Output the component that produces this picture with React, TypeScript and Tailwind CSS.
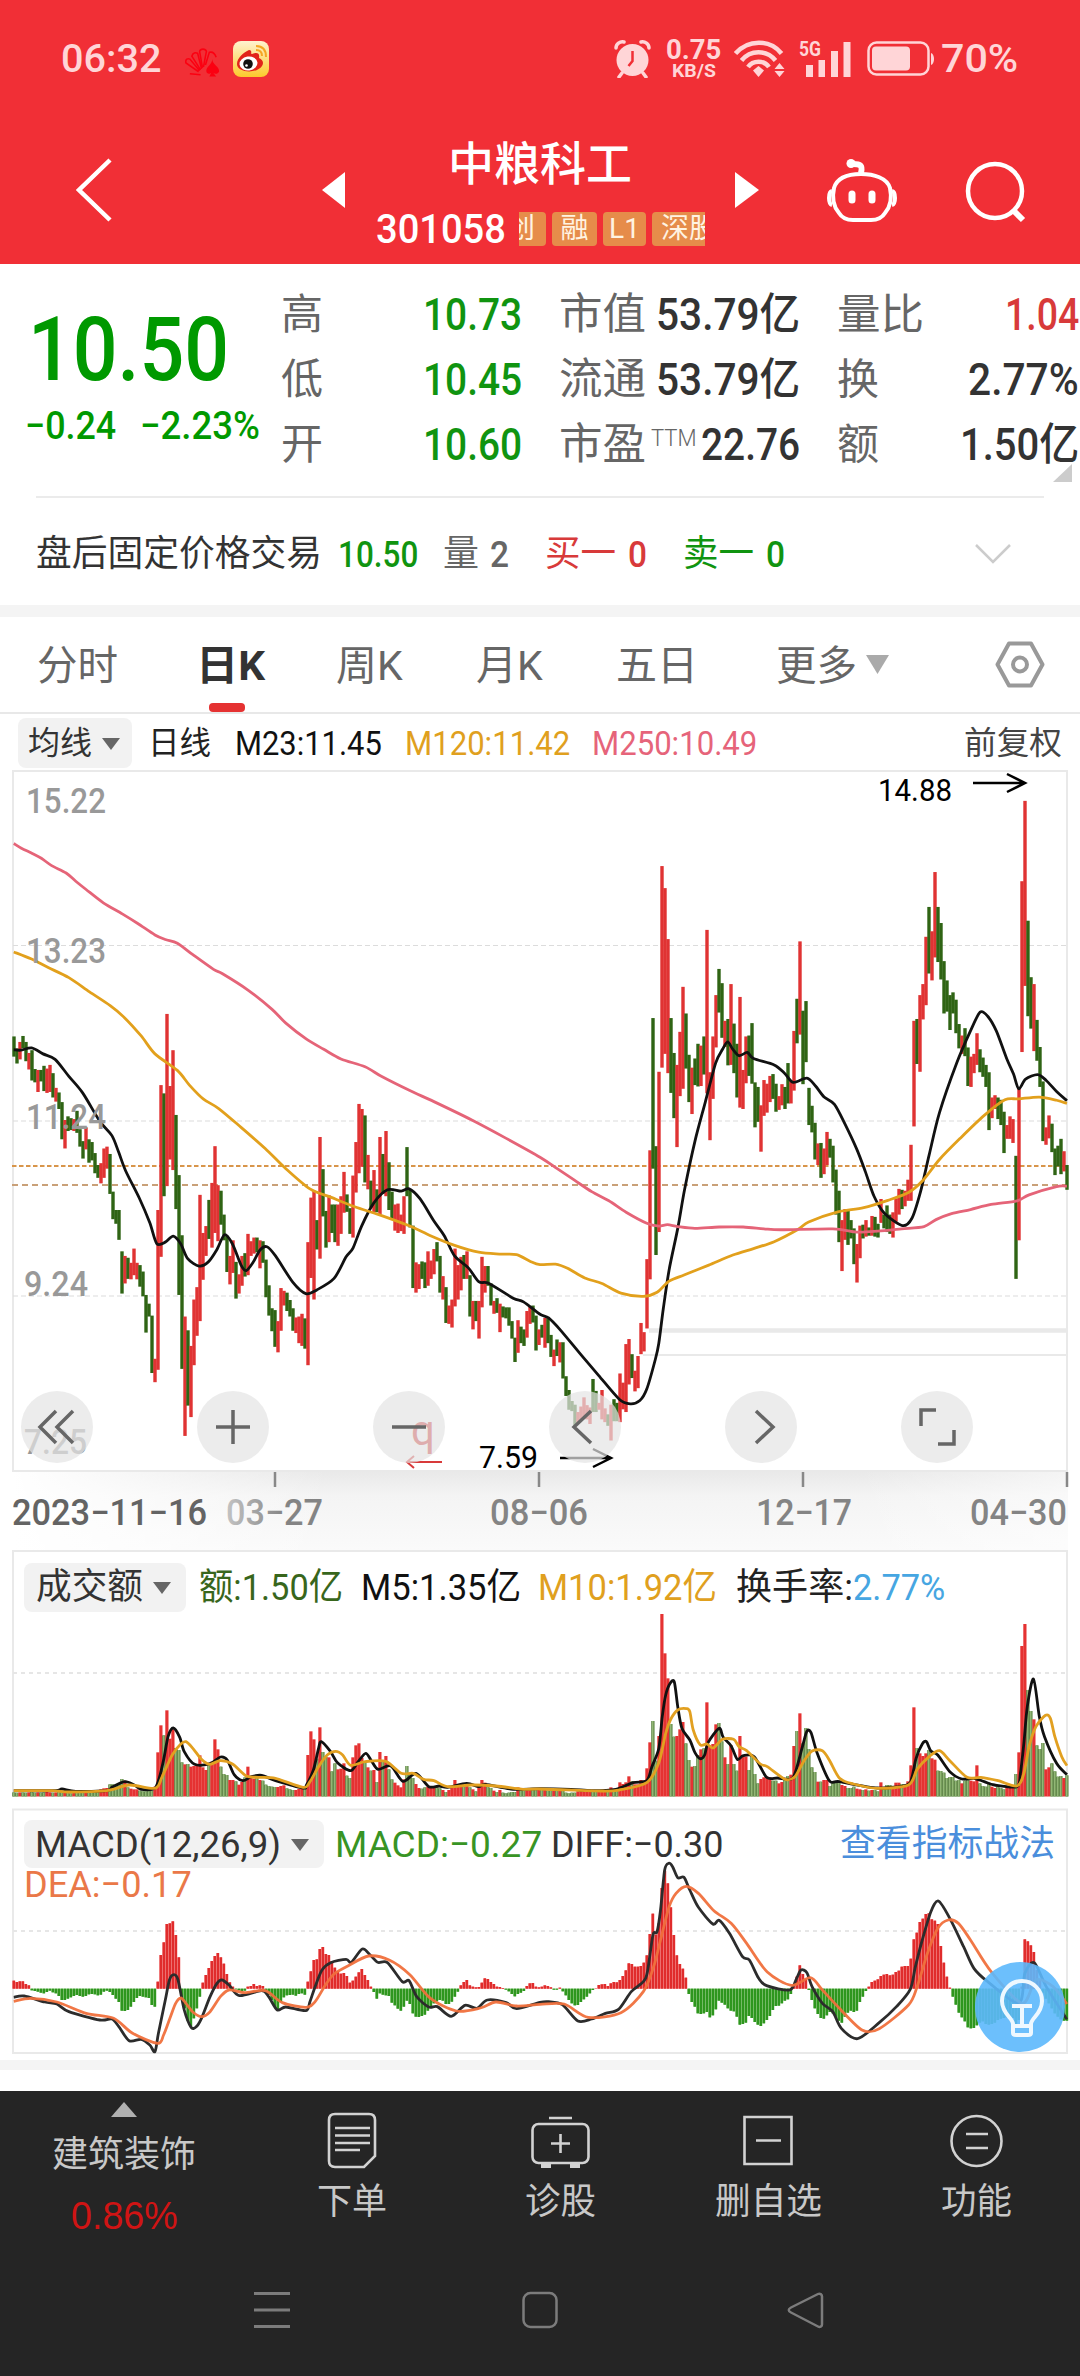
// src/App.tsx
import { useLayoutEffect, useRef, useState } from "react";
import type { ReactNode } from "react";

// One entry per trading day: direction, then the upper and lower end of the bar.
const CANDLES = `
g602-646 g628-661 r614-652 g601-628 g614-656 r638-674 g632-698 g673-702 r675-723 g675-700 g666-721 r672-725
r664-723 g682-735 r714-744 g724-760 g745-826 r784-846 g776-808 g780-806 r782-808 g764-812 g804-842 g830-868
r800-848 g826-877 g832-872 g856-900 g882-910 r878-922 r846-910 r842-890 g858-945 g940-1000 g980-1010 g980-1045
g1070-1162 r1080-1140 g1084-1130 r1095-1131 r1064-1122 r1095-1131 g1100-1147 g1114-1168 g1165-1247 g1184-1212
g1210-1335 r1304-1355 r980-1328 r708-1082 g726-950 r553-928 r710-870 r632-893 g773-978 g904-1165 g1035-1326
r1212-1472 g1242-1406 r1276-1431 r1175-1318 r1148-1254 r947-1222 r1030-1132 r1015-1080 g958-1043 r921-1062
r841-1030 r926-1048 g938-1012 g990-1046 g1036-1115 r1080-1142 r1046-1117 g1093-1173 r1120-1162 r1080-1145
g1074-1125 r1032-1122 r1048-1080 r1040-1075 g1040-1072 r1046-1107 g1048-1095 g1088-1170 g1144-1210 g1194-1244
g1198-1278 r1222-1290 r1150-1243 r1156-1188 g1160-1200 g1176-1212 g1194-1243 r1214-1248 r1212-1270 r1206-1276
g1216-1282 r1050-1318 r953-1128 r938-1175 g1002-1066 r821-1086 g891-994 g982-1062 r948-1050 g968-1030 g968-1050
r968-1058 r950-1032 r897-986 g946-984 g976-1032 r905-1040 r832-942 r749-900 r760-886 g774-920 r860-935 g916-975
r893-985 g935-985 r821-990 g858-945 r808-950 g876-980 g940-1000 r968-1025 r966-1030 r990-1026 r950-1032 g843-950
g935-1018 g1014-1150 r1094-1160 r1098-1152 g1092-1130 g1094-1150 r1070-1145 r1090-1130 r1065-1120 g1050-1092
g1080-1160 r1124-1175 g1148-1226 r1188-1228 r1175-1236 r1064-1190 r1100-1175 r1082-1155 g1078-1130 r1070-1130
g1122-1212 r1178-1240 g1178-1222 r1178-1260 r1082-1192 r1102-1160 g1102-1145 g1140-1188 r1178-1206 g1172-1204
r1184-1246 g1190-1214 g1192-1216 g1192-1232 g1222-1260 g1258-1311 r1220-1291 g1234-1270 g1240-1276 r1200-1258
r1190-1228 g1188-1225 g1210-1286 r1240-1274 g1230-1258 r1215-1280 g1216-1270 g1252-1300 r1284-1320 g1262-1298
r1268-1312 g1268-1347 g1342-1385 g1372-1415 g1396-1418 g1404-1450 r1420-1445 r1408-1436 r1388-1432 r1405-1436
r1410-1446 g1348-1420 g1374-1420 r1400-1415 r1372-1436 r1412-1442 g1425-1450 r1404-1482 g1392-1440 g1400-1440
r1336-1442 r1356-1414 r1272-1420 r1261-1360 g1294-1346 r1330-1375 r1298-1368 r1226-1294 r1246-1288 r1087-1238
r850-1131 g562-890 g841-1078 r679-1028 r231-670 r279-640 r390-682 g562-725 g638-780 r664-843 r592-732 r494-716
g552-672 g642-745 r670-771 g650-708 g618-711 r622-710 g602-685 r370-726 r680-828 r602-738 r512-626 g455-550
g486-605 r568-625 g564-665 r488-664 g574-682 g618-735 r516-757 r675-760 r602-704 g600-688 g573-705 g702-800
g712-788 r752-853 r697-775 r705-768 r688-745 g684-738 g705-766 r732-762 r706-752 g712-760 g660-748 r700-748
r590-720 g520-617 r395-598 g546-706 g525-658 g714-795 g753-811 g790-870 r835-882 g834-910 r846-902 r810-882
g825-866 g840-920 g892-990 g938-1050 r1002-1113 r978-1045 g978-1056 g1002-1042 g1020-1098 r1054-1138 r1014-1085
g1012-1042 r1002-1038 g1018-1036 r993-1036 g995-1038 g1010-1040 r956-1008 g990-1020 g970-1028 g990-1032
r985-1040 r955-1005 r934-990 g936-978 r938-972 r914-960 r838-960 r568-798 g564-662 r512-679 r488-565 r385-534
g320-465 r373-480 r244-430 g320-440 g355-478 g438-552 g480-548 g512-588 g506-552 g522-595 g575-628 r600-640
g584-645 g626-710 r646-712 r640-682 r595-664 g630-680 g648-690 g664-712 g680-806 r735-780 r730-760 g735-782
g740-795 g766-856 r795-825 r776-825 r782-834 g862-1130 r715-1046 r264-636 r89-492 g350-558 g473-585 r488-634
g566-655 g625-712 g700-830 r800-838 r774-824 g792-854 g846-904 g840-885 g825-902 r852-896 g882-936`
  .trim()
  .split(/\s+/)
  .map((s) => {
    const [top, bottom] = s.slice(1).split("-").map(Number);
    return { up: s[0] === "r", top, bottom };
  });

const nums = (s: string) => s.trim().split(/[\s,]+/).map(Number);

const VOLUME = nums(`
757 758 757 757 758 757 756 758 757 758 757 756 757 758 757 755 754 757 758 760 757 757 757 758 758 757 758 756
755 748 745 744 733 733 735 735 717 722 742 746 748 748 752 754 754 752 752 740 637 556 586 511 596 568 624 630
667 673 672 680 678 675 646 682 690 672 665 598 628 680 702 705 720 720 724 734 726 712 680 710 716 714 720 722
734 738 740 741 741 738 736 745 748 750 750 746 745 742 645 574 598 656 562 636 650 652 694 670 688 686 670 707
714 652 616 610 654 666 682 692 690 726 636 660 648 688 718 728 736 742 718 678 700 714 732 744 746 742 740 742
740 742 745 750 756 750 742 720 734 738 738 734 742 748 754 740 720 728 736 744 752 756 750 758 760 758 756 756
742 750 752 746 744 746 748 748 750 748 752 752 752 752 750 752 758 760 758 758 754 752 754 752 752 750 756 752
750 748 754 742 750 745 727 732 727 709 724 733 733 720 722 685 607 543 662 588 222 340 415 552 590 588 568 546
610 660 680 678 645 628 625 487 616 612 553 549 604 652 672 615 672 692 588 645 650 690 645 702 730 717 712 710
712 722 722 730 726 718 708 704 618 573 520 610 564 627 682 696 725 725 720 720 738 728 724 728 735 738 744 744
740 746 748 750 748 752 750 750 754 727 742 735 735 738 728 728 732 735 724 676 502 624 640 648 640 630 655 659
692 693 698 714 711 711 722 720 730 722 718 722 724 676 730 738 740 728 740 744 738 744 748 742 738 738 702 637
318 252 450 513 538 616 627 609 688 682 670 694 710 708 714 706`);

const MACD = nums(`
542 546 544 544 552 556 571 573 575 578 580 576 572 577 580 588 600 600 596 592 588 585 588 590 588 583 582 583
586 584 575 572 576 585 596 606 632 633 630 620 606 594 588 590 592 594 615 620 545 465 427 372 370 364 405 472
590 625 662 680 655 625 590 548 525 504 483 468 459 472 491 522 547 560 568 571 574 572 560 558 552 558 556 558
572 585 600 620 628 605 592 586 585 584 587 582 580 584 545 514 480 478 447 441 462 465 483 503 514 521 519 528
548 542 530 517 507 525 540 560 576 596 580 584 586 588 608 616 626 632 620 602 612 640 650 651 648 644 632 622
610 604 600 602 612 612 605 590 575 556 546 540 556 560 562 561 548 535 537 546 552 560 561 564 569 574 582 589
582 578 573 558 550 549 560 562 560 556 558 562 569 569 563 574 586 600 610 616 615 606 598 590 580 570 565 555
553 552 558 550 546 547 540 528 511 490 492 500 500 498 488 466 402 341 404 370 264 212 250 322 405 466 492 506
533 582 606 620 640 642 640 636 652 646 628 602 608 614 625 632 634 650 674 672 668 648 654 666 674 678 670 660
648 630 618 617 610 602 598 582 560 530 496 522 538 570 600 625 642 654 656 646 636 640 650 662 668 650 638 632
636 632 606 590 573 560 546 542 538 528 524 522 526 524 516 512 500 498 498 476 418 398 366 356 342 340 358 362
372 438 488 530 563 590 614 638 652 664 682 685 684 676 668 664 672 674 672 668 660 656 654 652 652 654 680 660
560 418 424 436 456 510 540 580 596 610 625 640 650 658 662 662`);

const MA250 = `40,182 62,192 95,204 120,214 150,230 192,246 220,264 250,282 300,311 355,335 400,356 450,381 480,391 515,399 560,424 620,456 645,465 720,501 790,543 830,573 890,608 940,630 990,651 1060,668 1110,690 1190,720 1260,744 1370,784 1470,824 1568,865
1618,890 1668,915 1718,940 1768,960 1818,985 1878,1009 1913,1015 1938,1012 1968,1016 2018,1020 2088,1017 2158,1017 2218,1021 2268,1023 2418,1021 2488,1028 2548,1026 2618,1021 2683,1016 2718,1001 2763,988 2818,979 2878,968 2953,960 2988,947 3068,929 3098,928`;
const MA120 = `40,418 90,433 140,452 200,474 260,505 320,535 360,560 410,601 450,640 515,676 550,708 590,738 635,759 700,800 770,846 830,890 900,934 960,952 1030,973 1100,990 1190,1015 1250,1036 1320,1057 1390,1072 1450,1076 1500,1077 1540,1092 1568,1099
1613,1098 1648,1107 1698,1128 1748,1140 1803,1161 1868,1168 1908,1159 1943,1135 1988,1121 2058,1100 2128,1078 2188,1064 2248,1049 2318,1022 2348,1006 2428,985 2508,975 2578,959 2638,942 2678,917 2728,870 2788,824 2858,774 2918,740 2958,738 3018,734 3068,741 3098,748`;
const MA23 = `40,631 60,632 92,627 125,640 160,652 200,689 240,725 290,787 325,818 345,855 365,895 405,955 435,1008 455,1053 480,1050 503,1037 525,1054 545,1086 578,1102 605,1093 630,1066 652,1034 675,1054 700,1100 715,1112 735,1094 755,1067 775,1060 800,1080 850,1137 888,1162 920,1154 970,1129 1005,1082 1025,1063 1050,1015 1085,965 1125,936 1165,939 1188,934 1220,956 1260,1004 1290,1036 1320,1080 1360,1106 1390,1136 1420,1140 1490,1172 1520,1180 1568,1207
1593,1215 1628,1242 1688,1296 1738,1340 1798,1392 1830,1402 1858,1395 1878,1370 1903,1305 1913,1270 1926,1195 1943,1110 1968,1020 1988,935 2018,830 2048,745 2078,660 2098,630 2113,614 2128,630 2146,644 2170,637 2188,650 2248,664 2278,682 2303,702 2343,693 2368,710 2393,734 2423,750 2453,792 2488,848 2513,897 2538,950 2568,987 2620,1014 2648,998 2673,940 2698,860 2728,768 2778,660 2818,590 2846,549 2868,558 2893,590 2923,650 2943,684 2958,716 2978,695 3013,685 3038,698 3068,722 3098,742`;
const VOL5 = `40,752 160,752 180,747 220,754 310,752 325,742 362,725 390,735 410,748 448,746 462,715 475,660 488,590 503,564 522,592 535,635 565,673 610,671 640,651 660,660 680,704 705,722 730,710 760,706 800,722 880,744 890,735 910,690 925,625 933,605 960,635 980,668 1018,692 1040,665 1062,640 1080,665 1098,688 1135,678 1170,724 1208,700 1245,740 1275,738 1300,742 1355,730 1390,740 1410,733 1490,748 1568,746
1658,748 1718,752 1788,748 1838,728 1878,722 1893,680 1913,625 1923,530 1933,465 1946,430 1958,426 1968,500 1980,565 2003,600 2018,638 2033,656 2046,645 2056,608 2088,565 2100,592 2123,618 2141,658 2158,647 2190,650 2226,712 2258,714 2298,717 2313,685 2330,620 2343,574 2355,578 2373,640 2408,722 2438,725 2548,744 2633,735 2648,712 2660,655 2678,612 2690,605 2703,633 2723,645 2758,695 2793,717 2828,715 2858,725 2888,735 2953,740 2963,700 2973,610 2983,500 3001,417 3018,530 3033,590 3068,670 3098,704`;
const VOL10 = `40,752 150,752 200,756 310,752 375,735 450,745 470,712 500,645 525,612 540,605 560,625 585,658 608,673 640,662 675,672 715,708 750,712 800,715 880,742 900,725 925,680 950,645 975,634 995,645 1018,676 1060,665 1120,664 1165,700 1200,700 1230,718 1260,722 1300,740 1370,735 1440,738 1520,748 1568,747
1748,753 1798,750 1878,728 1913,668 1933,580 1948,537 1968,510 1993,506 2003,515 2013,570 2033,614 2053,612 2071,624 2098,598 2130,598 2146,620 2168,632 2208,672 2228,680 2280,718 2308,710 2333,665 2358,633 2388,632 2408,660 2438,715 2478,732 2548,745 2638,735 2663,688 2698,650 2728,632 2758,662 2808,712 2848,712 2898,722 2953,738 2973,700 2988,620 3008,560 3036,526 3050,535 3063,590 3083,650 3098,677`;
const DIFF = `40,592 70,588 130,606 165,612 200,635 290,660 325,657 345,680 375,722 410,718 435,735 450,755 460,700 480,600 492,540 505,524 517,540 535,630 555,682 570,680 585,655 610,590 630,550 645,540 665,555 695,587 760,572 780,590 805,630 830,621 888,632 900,605 915,560 935,510 960,488 1005,478 1020,487 1052,447 1075,465 1097,487 1125,488 1168,545 1188,542 1210,590 1245,621 1270,620 1310,649 1350,616 1385,625 1415,600 1470,608 1500,626 1568,607
1593,605 1633,614 1678,663 1718,657 1758,640 1796,628 1833,575 1868,545 1880,515 1896,405 1908,395 1918,330 1930,210 1942,190 1953,200 1968,233 1986,232 2003,270 2028,322 2070,372 2088,361 2118,400 2156,470 2176,480 2203,535 2226,557 2293,570 2313,535 2326,510 2343,518 2358,560 2388,610 2418,635 2443,685 2490,716 2553,668 2603,620 2643,568 2658,500 2678,420 2703,335 2725,303 2758,355 2798,440 2828,505 2868,545 2958,610 2976,520 3003,488 3038,560 3098,658`;
const DEA = `40,604 90,595 165,606 250,640 330,655 385,700 458,730 475,705 495,650 510,610 525,594 540,610 560,636 585,650 610,635 640,590 665,570 710,578 770,572 820,608 888,622 915,605 945,555 970,522 1010,498 1070,468 1130,480 1190,524 1250,595 1325,633 1395,624 1440,606 1500,618 1568,613
1638,612 1708,652 1803,638 1868,575 1898,500 1918,420 1943,320 1963,280 1993,259 2028,280 2073,332 2123,370 2168,430 2228,516 2298,556 2353,533 2388,570 2433,620 2503,690 2553,686 2638,615 2663,560 2693,460 2723,385 2753,360 2783,370 2818,420 2878,515 2968,610 3008,540 3058,560 3098,612`;

const X_UNIT = 540 / 1568;
const PRICE_UNIT = 720 / 1568;
const barX = (i: number) => 12.3 + i * 3;

// Catmull-Rom through the given points, as cubic beziers.
function smooth(data: string, yUnit: number) {
  const v = nums(data);
  const p: number[][] = [];
  for (let i = 0; i < v.length; i += 2) p.push([v[i] * X_UNIT, v[i + 1] * yUnit]);
  let d = `M${p[0]}`;
  for (let i = 0; i < p.length - 1; i++) {
    const a = p[i - 1] ?? p[i];
    const b = p[i];
    const c = p[i + 1];
    const e = p[i + 2] ?? c;
    const k = 7;
    d += `C${b[0] + (c[0] - a[0]) / k} ${b[1] + (c[1] - a[1]) / k} ${c[0] - (e[0] - b[0]) / k} ${c[1] - (e[1] - b[1]) / k} ${c[0]} ${c[1]}`;
  }
  return d;
}

// Text squeezed or stretched horizontally so it takes exactly `w` pixels.
function Fit({ w, className = "", children }: { w: number; className?: string; children: ReactNode }) {
  const ref = useRef<HTMLSpanElement>(null);
  const [scale, setScale] = useState(1);
  useLayoutEffect(() => {
    if (ref.current) setScale(w / ref.current.offsetWidth);
  }, [w]);
  return (
    <span className={`flex shrink-0 items-center ${className}`} style={{ width: w }}>
      <span
        ref={ref}
        className="shrink-0 origin-left whitespace-nowrap"
        style={{ transform: `scaleX(${scale})` }}
      >
        {children}
      </span>
    </span>
  );
}

function Caret({ className = "" }: { className?: string }) {
  return (
    <svg className={`shrink-0 ${className}`} width="18" height="13" viewBox="0 0 18 13">
      <path d="M0 1h18L9 13z" fill="#666" />
    </svg>
  );
}

function StatusBar() {
  return (
    <div className="flex h-[116px] items-center pl-[61px] pt-[2px] text-[#ffd5d7]">
      <Fit w={100} className="text-[38px] font-medium">06:32</Fit>
      <svg className="ml-[24px] mt-2" width="36" height="30" viewBox="0 0 37 30" fill="none" stroke="#fb0011" strokeWidth="1.600">
        <path d="M16 27 5 26M14 24 1 15c-1-4 2-5 4-4l10 12M16 22 7 8c1-4 4-4 6-3l4 16M18 20 15 3c1-3 6-3 7 0l-3 16M21 17l4-13c4-1 6 2 7 5" />
        <path d="M28 11c0 6-7 8-6 13 1 3 4 2 5 1l-2 4h7l-3-4c2 2 5 1 6-1 1-5-7-7-7-13z" fill="#fb0011" stroke="none" />
      </svg>
      <svg className="ml-[12px]" width="36" height="36" viewBox="0 0 36 36">
        <defs>
          <linearGradient id="wb" x2="0" y2="1">
            <stop stopColor="#fff3d0" />
            <stop offset="1" stopColor="#fcc92c" />
          </linearGradient>
        </defs>
        <rect width="36" height="36" rx="8" fill="url(#wb)" />
        <path d="M4 23c0-6 7-12 12-14 4 0 1 4 3 4 5-2 8-1 7 4 4 2 5 5 3 8-5 8-25 7-25-2z" fill="#e2231a" />
        <ellipse cx="15.500" cy="22.500" rx="9" ry="7" fill="#fff" transform="rotate(-8 15.500 22.500)" />
        <circle cx="15" cy="23" r="4.800" fill="#111" />
        <circle cx="13.500" cy="24.500" r="1.300" fill="#fff" />
        <path d="M23 9c4 0 6 2 6 6M23 5c7 0 10 4 10 11" fill="none" stroke="#f5a623" strokeWidth="2" />
      </svg>
      <svg className="ml-[345px]" width="37" height="38" viewBox="0 0 37 38">
        <circle cx="18.500" cy="20" r="16" fill="#ffd5d7" />
        <path d="M2 8c0-4 4-7 8-6M35 8c0-4-4-7-8-6M8 33l-3 4M29 33l3 4" stroke="#ffd5d7" strokeWidth="3.500" fill="none" strokeLinecap="round" />
        <path d="M18.500 11v10l-4 5" stroke="#f12f36" strokeWidth="2.500" fill="none" />
      </svg>
      <div className="ml-[15px] flex w-[55px] flex-col items-center">
        <div className="flex h-[22px] items-center">
          <Fit w={55} className="text-[28px] font-bold">0.75</Fit>
        </div>
        <div className="mt-px flex h-[17px] items-center">
          <Fit w={44} className="text-[19px] font-bold">KB/S</Fit>
        </div>
      </div>
      <svg className="ml-[13px]" width="51" height="38" viewBox="0 0 51 38" fill="none" stroke="#ffd5d7" strokeWidth="4.500">
        <path d="M1.500 13.500C14-1 36-1 47.500 13.500M7.500 20.500c9-11 25-11 34 0M14 27c5-7 16-7 21 0" />
        <path d="m24.500 26 5.500 4.500-5.500 6.500-5.500-6.500z" fill="#ffd5d7" stroke="none" />
        <path d="m45.500 23 5 6h-10zM45.500 37l5-6h-10z" fill="#ffd5d7" stroke="none" />
      </svg>
      <svg className="ml-[14px] overflow-visible" width="54" height="38" viewBox="0 0 54 38" fill="#ffd5d7">
        <text x="0" y="16" fontSize="21" fontWeight="700" textLength="22" lengthAdjust="spacingAndGlyphs">5G</text>
        <path d="M7 25h7v12H7zM19.500 20h6.500v17h-6.500zM32 11h7v26h-7zM44.500 2h7v35h-7z" />
      </svg>
      <svg className="ml-[14px]" width="68" height="36" viewBox="0 0 68 36">
        <rect x="1.500" y="1.500" width="60" height="32" rx="8" fill="none" stroke="#ffd5d7" strokeWidth="2.500" />
        <rect x="5" y="5.500" width="38" height="24" rx="4" fill="#ffd5d7" />
        <path d="M64 12c4 1 4 11 0 12z" fill="#ffd5d7" />
      </svg>
      <Fit w={77} className="ml-[6px] text-[38px] font-medium">70%</Fit>
    </div>
  );
}

function NavBar() {
  return (
    <div className="flex h-[148px] items-center pl-[76px] text-white">
      <svg width="37" height="66" viewBox="0 0 37 66" fill="none" stroke="#fff" strokeWidth="4.500">
        <path d="M34 3 3 33l31 30" />
      </svg>
      <svg className="ml-[209px]" width="23" height="36" viewBox="0 0 23 36">
        <path d="M23 0v36L0 18z" fill="#fff" />
      </svg>
      <div className="ml-[31px] flex w-[329px] flex-col">
        <div className="mt-[6px] flex h-[64px] items-center pl-[72px]">
          <Fit w={184} className="text-[46px] font-medium">中粮科工</Fit>
        </div>
        <div className="mt-[8px] flex h-[51px] items-center">
          <Fit w={130} className="text-[41px] font-medium">301058</Fit>
          <div className="ml-[13px] flex h-[34px] w-[186px] gap-[6px] overflow-hidden whitespace-nowrap text-[28px] leading-[34px] text-[#fff3e2]">
            <span className="flex w-[27px] shrink-0 justify-end overflow-hidden rounded-r bg-[#e68c4a] pr-[11px]">创</span>
            <span className="flex w-[45px] shrink-0 justify-center rounded bg-[#e68c4a]">融</span>
            <span className="flex w-[43px] shrink-0 justify-center rounded bg-[#e68c4a]">L1</span>
            <span className="flex w-[53px] shrink-0 overflow-hidden rounded-l bg-[#e68c4a] pl-[9px]">深股</span>
          </div>
        </div>
      </div>
      <svg className="ml-[30px]" width="24" height="36" viewBox="0 0 24 36">
        <path d="M0 0v36l24-18z" fill="#fff" />
      </svg>
      <svg className="ml-[67px]" width="72" height="64" viewBox="0 0 72 64" fill="none" stroke="#fff" strokeWidth="4">
        <path d="M35 16c13 0 26 4 29 14 2 9 1 18-5 25-3 5-9 7-14 7H27c-5 0-11-2-14-7C7 48 6 39 8 30c3-10 14-14 27-14z" />
        <path d="M35 15c2-8-1-9-8-9" strokeWidth="6" />
        <circle cx="25" cy="5.500" r="4.500" fill="#fff" stroke="none" />
        <path d="M6 33c-4 1-4 13 0 14M66 33c4 1 4 13 0 14" />
        <path d="M26 36v6M46 36v6" strokeWidth="7" strokeLinecap="round" />
      </svg>
      <svg className="ml-[67px] mt-[3px]" width="62" height="62" viewBox="0 0 62 62" fill="none" stroke="#fff" strokeWidth="4.500">
        <circle cx="30" cy="30" r="27" />
        <path d="m49 50 9 9" strokeWidth="6" />
      </svg>
    </div>
  );
}

interface QuoteRow {
  a: [string, string];
  b: [string, string, number];
  c: [string, string, number, number];
}

const QUOTE_ROWS: QuoteRow[] = [
  { a: ["高", "10.73"], b: ["市值", "53.79亿", 144], c: ["量比", "1.04", 74, 87] },
  { a: ["低", "10.45"], b: ["流通", "53.79亿", 144], c: ["换", "2.77%", 111, 42] },
  { a: ["开", "10.60"], b: ["市盈", "22.76", 99], c: ["额", "1.50亿", 119, 42] },
];

function Quote() {
  return (
    <div className="flex h-[232px] pt-[18px]">
      <div className="w-[281px] shrink-0 text-[#009900]">
        <div className="mt-[12px] flex h-[110px] items-center pl-[28px]">
          <Fit w={201} className="text-[89px] font-medium">10.50</Fit>
        </div>
        <div className="mt-[-3px] flex h-[50px] items-center pl-[25px]">
          <Fit w={91} className="text-[39px] font-medium">−0.24</Fit>
          <Fit w={120} className="ml-[24px] text-[39px] font-medium">−2.23%</Fit>
        </div>
      </div>
      <div className="relative flex-1">
        {QUOTE_ROWS.map((row, i) => (
          <div key={row.a[0]} className="flex h-[65px] items-center text-[44px] text-[#666]">
            <Fit w={42} className="text-[42px] font-normal">{row.a[0]}</Fit>
            <Fit w={99} className="ml-[100px] font-medium text-[#109410]">{row.a[1]}</Fit>
            <div className="ml-[37px] flex w-[241px] items-center justify-between">
              <Fit w={87} className="text-[43px] font-normal">{row.b[0]}</Fit>
              {i === 2 && <Fit w={46} className="mb-[14px] text-[24px] font-light">TTM</Fit>}
              <Fit w={row.b[2]} className="font-medium text-[#333]">{row.b[1]}</Fit>
            </div>
            <div className="ml-[37px] flex w-[242px] shrink-0 items-center justify-between">
              <Fit w={row.c[3]} className="text-[42px] font-normal">{row.c[0]}</Fit>
              <Fit w={row.c[2]} className={`font-medium ${i === 0 ? "text-[#d83a3a]" : "text-[#333]"}`}>
                {row.c[1]}
              </Fit>
            </div>
          </div>
        ))}
        <svg className="absolute right-[8px] top-[182px]" width="19" height="18" viewBox="0 0 19 18">
          <path d="M19 0v18H0z" fill="#ccc" />
        </svg>
      </div>
    </div>
  );
}

function AfterHours() {
  return (
    <>
      <div className="mx-9 h-[2px] bg-[#ebebeb]" />
      <div className="flex h-[107px] items-center pl-[36px] pt-[5px] text-[37px]">
        <Fit w={286} className="text-[36px] text-[#333]">盘后固定价格交易</Fit>
        <Fit w={80} className="ml-[16px] font-medium text-[#109410]">10.50</Fit>
        <Fit w={36} className="ml-[25px] text-[36px] text-[#666]">量</Fit>
        <Fit w={19} className="ml-[11px] font-medium text-[#666]">2</Fit>
        <Fit w={71} className="ml-[36px] text-[36px] text-[#d83a3a]">买一</Fit>
        <Fit w={19} className="ml-[12px] font-medium text-[#d83a3a]">0</Fit>
        <Fit w={71} className="ml-[36px] text-[36px] text-[#109410]">卖一</Fit>
        <Fit w={19} className="ml-[12px] font-medium text-[#109410]">0</Fit>
        <svg className="ml-[189px]" width="38" height="22" viewBox="0 0 38 22" fill="none" stroke="#ccc" strokeWidth="2.500">
          <path d="m2 2 17 17L36 2" />
        </svg>
      </div>
      <div className="h-3 bg-[#f4f4f4]" />
    </>
  );
}

function PeriodTabs() {
  return (
    <div className="flex h-[97px] items-center border-b-2 border-[#e8e8e8] pl-[37px] text-[41px] text-[#666]">
      <Fit w={81} className="pt-[3px]">分时</Fit>
      <div className="relative ml-[78px] flex h-full items-center">
        <Fit w={69} className="pt-[3px] font-bold text-[#333]">日K</Fit>
        <span className="absolute bottom-0 left-[13px] h-[9px] w-9 rounded bg-[#e53232]" />
      </div>
      <Fit w={67} className="ml-[71px] pt-[3px]">周K</Fit>
      <Fit w={67} className="ml-[73px] pt-[3px]">月K</Fit>
      <Fit w={82} className="ml-[73px] pt-[3px]">五日</Fit>
      <Fit w={81} className="ml-[78px] pt-[3px]">更多</Fit>
      <svg className="ml-[9px]" width="23" height="19" viewBox="0 0 23 19">
        <path d="M0 0h23L11.500 19z" fill="#aaa" />
      </svg>
      <svg className="ml-[106px]" width="50" height="47" viewBox="0 0 50 47" fill="none" stroke="#999" strokeWidth="4">
        <path d="M14 2.500h22L47.500 23.500 36 44.500H14L2.500 23.500z" strokeLinejoin="round" />
        <circle cx="25" cy="23.500" r="7" />
      </svg>
    </div>
  );
}

function PriceLegend() {
  return (
    <div className="flex h-[56px] items-center pl-[18px] pt-[2px] text-[33px]">
      <div className="flex h-[50px] w-[114px] items-center rounded-lg bg-[#f2f2f2] pl-[10px]">
        <Fit w={64} className="text-[32px] text-[#333]">均线</Fit>
        <Caret className="ml-[10px]" />
      </div>
      <Fit w={63} className="ml-[16px] text-[32px] text-[#222]">日线</Fit>
      <Fit w={147} className="ml-[24px] text-[#111]">M23:11.45</Fit>
      <Fit w={165} className="ml-[23px] text-[#e0a01e]">M120:11.42</Fit>
      <Fit w={165} className="ml-[22px] text-[#e6647a]">M250:10.49</Fit>
      <Fit w={98} className="ml-[207px] text-[32px] text-[#444]">前复权</Fit>
    </div>
  );
}

const CONTROLS = [
  "m56 1411-16 16 16 16M73 1411l-16 16 16 16",
  "M216 1427h34M233 1410v34",
  "M392 1427h34",
  "m591 1411-17 16 17 16",
  "m756 1411 17 16-17 16",
  "M921 1426v-16h15M954 1430v14h-16",
];

const AXIS_PRICES: [string, number, number, number][] = [
  ["15.22", 26, 813, 80],
  ["13.23", 26, 963, 80],
  ["11.24", 26, 1129, 80],
  ["9.24", 24, 1296, 64],
  ["7.25", 24, 1454, 63],
];

function PriceChart() {
  return (
    <svg className="block" width="1080" height="780" viewBox="0 770 1080 780">
      <defs>
        <linearGradient id="shade" x2="0" y2="1">
          <stop stopColor="#e9e9e9" />
          <stop offset=".3" stopColor="#f4f4f4" />
          <stop offset="1" stopColor="#fafafa" />
        </linearGradient>
        <linearGradient id="shadeX">
          <stop stopColor="#fff" />
          <stop offset=".3" stopColor="#fff" stopOpacity="0" />
          <stop offset=".8" stopColor="#fff" stopOpacity="0" />
          <stop offset="1" stopColor="#fff" stopOpacity=".5" />
        </linearGradient>
        <linearGradient id="fade" gradientUnits="userSpaceOnUse" x1="225" x2="285" y1="0" y2="0">
          <stop stopColor="#c4c4c4" />
          <stop offset="1" stopColor="#848484" />
        </linearGradient>
      </defs>
      <rect x="13" y="1472" width="1055" height="78" fill="url(#shade)" />
      <rect x="13" y="1472" width="1055" height="78" fill="url(#shadeX)" />
      <path d="M13 771H1067V1471H13z" fill="none" stroke="#e9e9e9" strokeWidth="2" />
      <path d="M13 945.500H1067M13 1121H1067M13 1296H1067" stroke="#dcdcdc" strokeWidth="1.200" strokeDasharray="5 3" />
      <path d="M12 1166H1067" stroke="#d8954a" strokeWidth="2" strokeDasharray="4.500 2.500" />
      <path d="M12 1185H1067" stroke="#c9a078" strokeWidth="2" strokeDasharray="6 4" />
      <path d="M649 1330.500H1067" stroke="#e9e9e9" strokeWidth="4.500" />
      <path d="M643 1355H1067" stroke="#e9e9e9" strokeWidth="2" />

      {CANDLES.map((c, i) => (
        <rect
          key={i}
          x={barX(i)}
          y={760 + c.top * PRICE_UNIT}
          width="3.4"
          height={(c.bottom - c.top) * PRICE_UNIT}
          fill={c.up ? "#e03333" : "#2f6414"}
        />
      ))}

      <g fill="none" strokeWidth="2.800" strokeLinejoin="round" transform="translate(0 760)">
        <path d={smooth(MA23, PRICE_UNIT)} stroke="#111" />
        <path d={smooth(MA120, PRICE_UNIT)} stroke="#e2a01c" />
        <path d={smooth(MA250, PRICE_UNIT)} stroke="#e56478" />
      </g>

      <g fill="#999" fontSize="35" fontWeight="500">
        {AXIS_PRICES.map(([label, x, y, w]) => (
          <text key={label} x={x} y={y} textLength={w} lengthAdjust="spacingAndGlyphs">{label}</text>
        ))}
      </g>

      <g fill="#000" fontSize="31">
        <text x="878" y="801" textLength="74" lengthAdjust="spacingAndGlyphs">14.88</text>
        <text x="479" y="1468" textLength="59" lengthAdjust="spacingAndGlyphs">7.59</text>
      </g>
      <g fill="none" stroke="#000" strokeWidth="2.500">
        <path d="M973 783h51M1007 774l18 9-18 9" />
        <path d="M560 1458h50M593 1449l18 9-18 9" />
        <path d="M408 1462h34M414 1456l-7 6 7 6" stroke="#d83a3a" strokeWidth="2" />
      </g>
      <text x="411" y="1445" fontSize="42" fill="#d02c2c">q</text>

      {CONTROLS.map((d, i) => (
        <g key={d}>
          <circle cx={57 + i * 176} cy="1427" r="36" fill="#e4e4e4" fillOpacity=".7" />
          <path d={d} fill="none" stroke="#666" strokeWidth="3.500" />
        </g>
      ))}

      <path d="M275 1472v15M539 1472v15M803 1472v15M1067 1472v15" stroke="#888" strokeWidth="2.500" />
      <g fill="#848484" fontSize="36" fontWeight="500">
        <text x="12" y="1525" fill="#646464" textLength="195" lengthAdjust="spacingAndGlyphs">2023−11−16</text>
        <text x="226" y="1525" fill="url(#fade)" textLength="97" lengthAdjust="spacingAndGlyphs">03−27</text>
        <text x="490" y="1525" textLength="98" lengthAdjust="spacingAndGlyphs">08−06</text>
        <text x="756" y="1525" textLength="96" lengthAdjust="spacingAndGlyphs">12−17</text>
        <text x="970" y="1525" textLength="97" lengthAdjust="spacingAndGlyphs">04−30</text>
      </g>
    </svg>
  );
}

function VolumeChart() {
  return (
    <div className="h-[258px]">
      <div className="mx-[12px] flex h-[72px] items-center border-x-2 border-t-2 border-[#e9e9e9] pl-[10px] text-[37px]">
        <div className="flex h-[49px] w-[162px] items-center rounded-lg bg-[#f2f2f2] pl-[12px]">
          <Fit w={107} className="text-[36px] text-[#333]">成交额</Fit>
          <Caret className="ml-[10px]" />
        </div>
        <Fit w={144} className="ml-[13px] text-[#38661c]">额:1.50亿</Fit>
        <Fit w={160} className="ml-[18px] text-[#111]">M5:1.35亿</Fit>
        <Fit w={179} className="ml-[17px] text-[#e0a01e]">M10:1.92亿</Fit>
        <Fit w={117} className="ml-[19px] text-[#222]">换手率:</Fit>
        <Fit w={92} className="text-[#46a6e2]">2.77%</Fit>
      </div>
      <svg className="block overflow-visible" width="1080" height="186" viewBox="0 0 1080 186">
        <path d="M13 0V175M1067 0V175" stroke="#e9e9e9" strokeWidth="2" />
        <path d="M13 51H1067" stroke="#e6e6e6" strokeWidth="2" strokeDasharray="4 4" />
        <g transform="translate(0 -82)">
          {VOLUME.map((v, i) => {
            const up = CANDLES[i].up;
            const y = v / 3;
            return (
              <g key={i}>
                <rect x={barX(i)} y={y} width="3.2" height={256.5 - y} fill={up ? "#e53232" : "#4a7630"} />
                {!up && <rect x={barX(i) + 0.7} y={y} width="1.6" height={256.5 - y} fill="#92b676" />}
              </g>
            );
          })}
          <g fill="none" strokeWidth="2.800" strokeLinejoin="round">
            <path d={smooth(VOL5, 1 / 3)} stroke="#111" />
            <path d={smooth(VOL10, 1 / 3)} stroke="#e2a020" />
          </g>
        </g>
      </svg>
    </div>
  );
}

function MacdChart() {
  return (
    <div className="relative h-[252px]">
      <svg className="block" width="1080" height="252" viewBox="0 1808 1080 252">
        <path d="M13 1809.500H1067V2053H13z" fill="none" stroke="#e9e9e9" strokeWidth="2" />
        <path d="M13 1931H1067" stroke="#e6e6e6" strokeWidth="2" strokeDasharray="4 4" />
        <g transform="translate(0 1800)">
          {MACD.map((v, i) => {
            const up = v < 566;
            const y = Math.min(v, 566) / 3;
            const h = Math.abs(v - 566) / 3;
            return (
              <g key={i}>
                <rect x={barX(i)} y={y} width="3" height={h} fill={up ? "#f07070" : "#76bd66"} />
                <rect x={barX(i) + 0.4} y={y} width="2.3" height={h} fill={up ? "#e02c2c" : "#2e961e"} />
              </g>
            );
          })}
          <g fill="none" strokeWidth="2.800" strokeLinejoin="round">
            <path d={smooth(DIFF, 1 / 3)} stroke="#2c2c2c" />
            <path d={smooth(DEA, 1 / 3)} stroke="#f0703c" strokeOpacity=".95" />
          </g>
        </g>
        <circle cx="1020" cy="2007" r="45" fill="#5cb8fc" fillOpacity=".9" />
        <g fill="none" stroke="#eef8ff" strokeWidth="4" strokeLinejoin="round">
          <path d="M1013 2024c0-6-11-10-11-23a20 20 0 0 1 40 0c0 13-11 17-11 23v9c0 2-1 2-3 2h-12c-2 0-3 0-3-2z" />
          <path d="M1012 2006h20M1022 2006v18M1013 2026h18" />
        </g>
      </svg>
      <div className="absolute inset-x-0 top-[12px] pl-[24px] text-[37px]">
        <div className="flex h-[48px] items-center">
          <div className="flex h-[48px] w-[300px] items-center rounded-lg bg-[#f2f2f2] pl-[11px]">
            <Fit w={246} className="text-[#333]">MACD(12,26,9)</Fit>
            <Caret className="ml-[10px]" />
          </div>
          <Fit w={207} className="ml-[11px] text-[#389424]">MACD:−0.27</Fit>
          <Fit w={173} className="ml-[9px] text-[#333]">DIFF:−0.30</Fit>
          <Fit w={215} className="ml-[116px] text-[36px] text-[#4a8edc]">查看指标战法</Fit>
        </div>
        <div className="mt-[-5px] flex h-[42px] items-center">
          <Fit w={168} className="text-[#ea7848]">DEA:−0.17</Fit>
        </div>
      </div>
    </div>
  );
}

const ACTIONS: { label: string; w: number; icon: ReactNode }[] = [
  {
    label: "下单",
    w: 70,
    icon: (
      <>
        <path d="M12 4h34c4 0 6 2 6 6v36L41 57H12c-4 0-6-2-6-6V10c0-4 2-6 6-6z" />
        <path d="M12 18h35M12 25.500h35M12 33h35M12 40h25" />
      </>
    ),
  },
  {
    label: "诊股",
    w: 71,
    icon: (
      <>
        <rect x="1.500" y="14" width="56" height="39" rx="6" />
        <path d="M18 8h23M29.500 24v19M20 33.500h19" />
        <path d="M10 56h10M39 56h10" strokeWidth="4" />
      </>
    ),
  },
  { label: "删自选", w: 107, icon: <path d="M5.500 7h47v47h-47zM17 30.500h25" /> },
  {
    label: "功能",
    w: 71,
    icon: (
      <>
        <circle cx="29.500" cy="31" r="25" />
        <path d="M19 24h22M19 38h22" />
      </>
    ),
  },
];

function BottomBar() {
  return (
    <div className="h-[285px] bg-[#252525] text-[#c8c8c8]">
      <div className="flex h-[170px]">
        <div className="flex w-[248px] flex-col items-center pt-[11px]">
          <svg width="26" height="15" viewBox="0 0 26 15">
            <path d="M13 0l13 15H0z" fill="#b0b0b0" />
          </svg>
          <div className="mt-[13px] flex h-[50px] items-center">
            <Fit w={144} className="text-[36px]">建筑装饰</Fit>
          </div>
          <div className="mt-[11px] flex h-[50px] items-center font-['Liberation_Sans',sans-serif]">
            <Fit w={107} className="text-[38px] text-[#d01414]">0.86%</Fit>
          </div>
        </div>
        {ACTIONS.map((a) => (
          <div key={a.label} className="flex w-[208px] flex-col items-center pt-[19px]">
            <svg width="59" height="60" viewBox="0 0 59 60" fill="none" stroke="#d2d2d2" strokeWidth="2.600">
              {a.icon}
            </svg>
            <div className="mt-[7px] flex h-[50px] items-center">
              <Fit w={a.w} className="text-[36px]">{a.label}</Fit>
            </div>
          </div>
        ))}
      </div>
      <div className="flex h-[98px] items-center pl-[254px]">
        <svg width="37" height="38" viewBox="0 0 37 38" stroke="#7c7c7c" strokeWidth="3">
          <path d="M0 2.500h36M0 19h36M0 35.500h36" />
        </svg>
        <svg className="ml-[231px]" width="36" height="38" viewBox="0 0 36 38" fill="none" stroke="#7c7c7c" strokeWidth="2.500">
          <rect x="1.500" y="2" width="33" height="34" rx="7" />
        </svg>
        <svg className="ml-[229px]" width="37" height="38" viewBox="0 0 37 38" fill="none" stroke="#7c7c7c" strokeWidth="2.500">
          <path d="M31 3 4 16.500c-3 1.500-3 3.500 0 5L31 35.500c2 1 4 0 4-2v-28c0-2-2-3.500-4-2.500z" />
        </svg>
      </div>
    </div>
  );
}

export default function App() {
  return (
    <div className="h-[2376px] w-[1080px] overflow-hidden bg-white font-['Roboto','Noto_Sans_CJK_SC',sans-serif] leading-none">
      <div className="bg-[#f12f36]">
        <StatusBar />
        <NavBar />
      </div>
      <Quote />
      <AfterHours />
      <PeriodTabs />
      <PriceLegend />
      <PriceChart />
      <VolumeChart />
      <MacdChart />
      <div className="mb-[21px] h-[10px] bg-[#f4f4f4]" />
      <BottomBar />
    </div>
  );
}
